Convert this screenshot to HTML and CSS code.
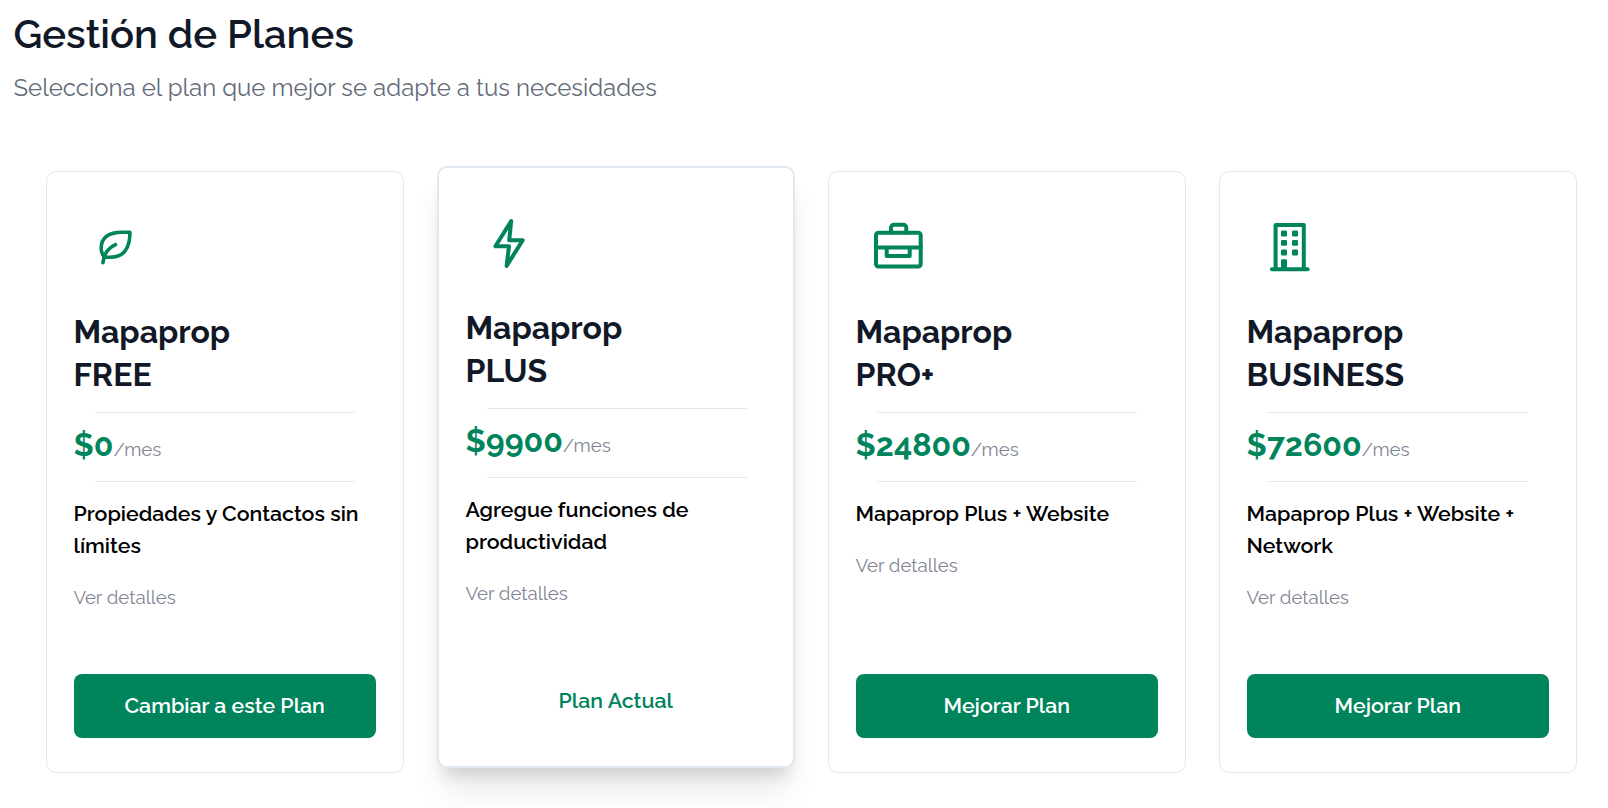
FILE: index.html
```html
<!DOCTYPE html>
<html lang="es">
<head>
  <meta charset="UTF-8" />
  <meta name="viewport" content="width=device-width, initial-scale=1" />
  <title>Gestión de Planes</title>
  <link rel="stylesheet" href="styles.css">
</head>
<body>

  <header class="page-header">
    <h1>Gestión de Planes</h1>
    <p class="subtitle">Selecciona el plan que mejor se adapte a tus necesidades</p>
  </header>

  <main class="plans">

    <!-- FREE -->
    <section class="card">
      <div class="icon">
        <svg class="leaf" viewBox="0 0 24 24" aria-hidden="true">
          <path d="M5 21c.5-4.5 2.5-8 7-10" />
          <path d="M9 18c6.218 0 10.5-3.288 11-12V4h-4.014c-9 0-11.986 4-12 9 0 1 0 3 2 5h3z" />
        </svg>
      </div>
      <h2>Mapaprop<br>FREE</h2>
      <p class="price"><span class="amount">$0</span><span class="period">/mes</span></p>
      <p class="description">Propiedades y Contactos sin límites</p>
      <a class="details">Ver detalles</a>
      <button class="btn">Cambiar a este Plan</button>
    </section>

    <!-- PLUS -->
    <section class="card current">
      <div class="icon">
        <svg viewBox="0 0 60 60" aria-hidden="true">
          <path d="M33.2 8 17.4 33.2H31L28.6 53 44.7 27.2H31.2Z" />
        </svg>
      </div>
      <h2>Mapaprop<br>PLUS</h2>
      <p class="price"><span class="amount">$9900</span><span class="period">/mes</span></p>
      <p class="description">Agregue funciones de productividad</p>
      <a class="details">Ver detalles</a>
      <button class="btn btn-current">Plan Actual</button>
    </section>

    <!-- PRO+ -->
    <section class="card">
      <div class="icon">
        <svg viewBox="0 0 60 60" aria-hidden="true">
          <rect x="8" y="15.8" width="44.7" height="33.8" rx="2.5" />
          <path d="M23 15.8V10.7a3 3 0 0 1 3-3h9.3a3 3 0 0 1 3 3v5.1M8 30.5h44.7M18.7 30.5v8.4h23v-8.4" />
        </svg>
      </div>
      <h2>Mapaprop<br>PRO+</h2>
      <p class="price"><span class="amount">$24800</span><span class="period">/mes</span></p>
      <p class="description">Mapaprop Plus + Website</p>
      <a class="details">Ver detalles</a>
      <button class="btn">Mejorar Plan</button>
    </section>

    <!-- BUSINESS -->
    <section class="card">
      <div class="icon">
        <svg viewBox="0 0 60 60" aria-hidden="true">
          <path d="M16.6 52V8h28.2v44M12.9 52.2h35.8" />
          <g class="solid">
            <rect x="22" y="13.6" width="6" height="5.8" rx="1.2" />
            <rect x="33" y="13.6" width="6" height="5.8" rx="1.2" />
            <rect x="22" y="23" width="6" height="5.8" rx="1.2" />
            <rect x="33" y="23" width="6" height="5.8" rx="1.2" />
            <rect x="22" y="32.6" width="6" height="5.8" rx="1.2" />
            <rect x="33" y="32.6" width="6" height="5.8" rx="1.2" />
            <rect x="22" y="42.3" width="6" height="9" rx="1.2" />
          </g>
        </svg>
      </div>
      <h2>Mapaprop<br>BUSINESS</h2>
      <p class="price"><span class="amount">$72600</span><span class="period">/mes</span></p>
      <p class="description">Mapaprop Plus + Website + Network</p>
      <a class="details">Ver detalles</a>
      <button class="btn">Mejorar Plan</button>
    </section>

  </main>

</body>
</html>
```
FILE: styles.css
```css
* {
  box-sizing: border-box;
}

body {
  margin: 0;
  min-height: 100vh;
  padding: 10px 14px 0 13.5px;
  background: #fff;
  font-family: 'Raleway', 'Lato', sans-serif;
  color: #000;
}

h1, h2, p {
  margin: 0;
}

h1 {
  font-size: 40px;
  line-height: 48px;
  font-weight: 600;
  color: #111827;
}

.subtitle {
  margin-top: 12px;
  font-size: 24px;
  line-height: 36px;
  color: #646b79;
}

.plans {
  display: grid;
  grid-template-columns: repeat(4, 1fr);
  gap: 32.66px;
  padding: 65px 17px 0 32px;
}

.card {
  display: flex;
  flex-direction: column;
  align-items: flex-start;
  height: 602px;
  padding: 33px 27px 34px;
  background: #fff;
  border: 1px solid #e2e8f0;
  border-radius: 10px;
}

.current {
  border-width: 2px;
  transform: translateY(-5px);
  box-shadow: 0 26px 33px -6px rgba(0,0,0,0.1), 0 13px 13px -6px rgba(0,0,0,0.1);
}

.icon {
  display: flex;
  align-items: center;
  justify-content: center;
  width: 84px;
  height: 84px;
  margin-bottom: 21px;
}

.icon svg {
  width: 60px;
  height: 60px;
  fill: none;
  stroke: #00845c;
  stroke-width: 4;
  stroke-linecap: round;
  stroke-linejoin: round;
}

.icon .leaf {
  width: 43px;
  height: 43px;
  margin-bottom: 1px;
  stroke-width: 2;
}

.icon .solid {
  fill: #00845c;
  stroke: none;
}

h2 {
  font-size: 32px;
  line-height: 43px;
  font-weight: 700;
  color: #111827;
}

.price {
  width: 260px;
  height: 70px;
  margin: 16px 0 0 21px;
  padding-top: 10px;
  border-top: 1px solid #e5e7eb;
  border-bottom: 1px solid #e5e7eb;
  line-height: 43px;
  white-space: nowrap;
}

.amount {
  margin-left: -21px;
  font-size: 32px;
  font-weight: 700;
  font-variant-numeric: oldstyle-nums;
  color: #00845c;
}

.period {
  font-size: 18.67px;
  color: #7f8594;
}

.description {
  margin-top: 16px;
  font-size: 21.33px;
  line-height: 32px;
  font-weight: 600;
}

.details {
  margin-top: 20px;
  font-size: 18.67px;
  line-height: 30px;
  color: #7f8594;
}

.btn {
  width: 100%;
  height: 64px;
  margin-top: auto;
  padding-bottom: 3px;
  border: none;
  border-radius: 8px;
  background: #00845c;
  color: #fff;
  font-family: inherit;
  font-size: 21.33px;
  font-weight: 600;
  cursor: pointer;
}

.btn-current {
  padding-bottom: 1px;
  background: transparent;
  color: #00845c;
}
```
